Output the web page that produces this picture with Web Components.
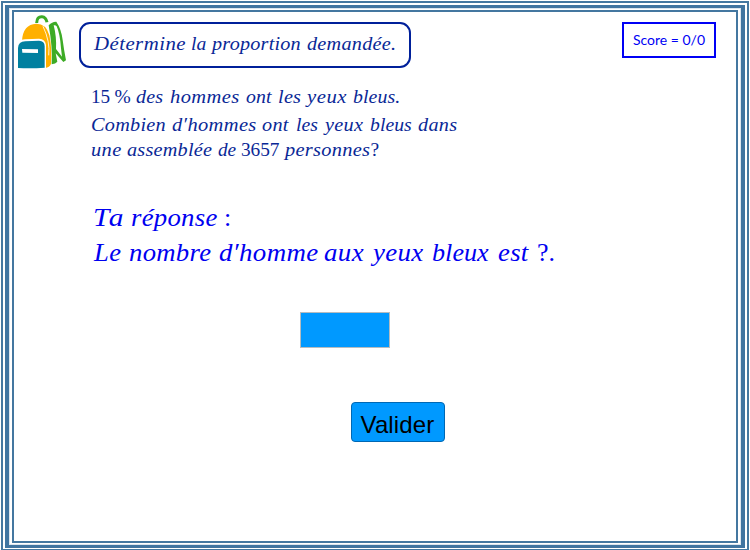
<!DOCTYPE html>
<html lang="fr"><head><meta charset="utf-8"><title>Proportion</title>
<style>html,body{margin:0;width:750px;height:550px;overflow:hidden;background:#fff}</style></head>
<body><exercise-page></exercise-page>
<script>
/* A word set in a fixed measure: part of the difference goes to glyph width, the rest to letter spacing. */
class MathWord extends HTMLElement{
  connectedCallback(){
    const r=this.attachShadow({mode:'open'});
    const w=+this.getAttribute('w');
    r.innerHTML=`<style>:host{display:block;white-space:pre;flex:none;width:${w}px;margin-left:${this.getAttribute('gap')||0}px}
    :host([up]){font-style:normal}
    span{display:inline-block;transform-origin:0 50%}</style><span></span>`;
    const s=r.querySelector('span'); s.textContent=this.getAttribute('t');
    const n=[...s.textContent].length, nat=s.getBoundingClientRect().width;
    const k=n>1?1+(w/nat-1)*.6:1;
    s.style.transform=`scaleX(${k.toFixed(4)})`;
    if(n>1) s.style.letterSpacing=((w/k-nat)/(n-1)).toFixed(3)+'px';
  }
}
/* A line of words, each given as text~left~right, with ~u for upright glyphs. */
class MathLine extends HTMLElement{
  connectedCallback(){
    const r=this.attachShadow({mode:'open'});
    let x=+this.getAttribute('from'), h='';
    for(const p of this.getAttribute('words').split('|')){
      const [t,a,b,up]=p.split('~');
      h+=`<math-word t="${t}" w="${(b-a).toFixed(1)}" gap="${(a-x).toFixed(1)}" ${up?'up':''}></math-word>`; x=+b;
    }
    r.innerHTML=`<style>:host{display:flex;font-family:"Liberation Serif",serif;font-style:italic;line-height:26px;height:26px}</style>`+h;
  }
}
class SchoolBag extends HTMLElement{
  connectedCallback(){
    this.attachShadow({mode:'open'}).innerHTML=`<style>:host{display:block;width:52px;height:58px}svg{display:block}</style>
    <svg width="52" height="58" viewBox="48 39 156 174">
      <path d="M110 69Q111 49 126 50Q138 51 141 67" fill="none" stroke="#3dab26" stroke-width="9"/>
      <path d="M146 76Q157 64 169 65Q184 87 188 120Q192 151 198 181L190 186L167 160L172 185Q167 192 155 193Q158 141 146 76Z" fill="#3dab26"/>
      <path d="M161 76Q166 74 170 79Q180 101 183 145L186 170L168 147Q170 110 161 76Z" fill="#fff"/>
      <path d="M66 122Q69 73 109 71Q139 71 148 106Q156 142 153 192Q148 204 132 204V124Z" fill="#ffb000"/>
      <path d="M129 79Q151 125 146 166" fill="none" stroke="#fff" stroke-width="2.5"/>
      <path d="M51 204V138Q53 119 75 118L117 116Q136 117 138 135V205Z" fill="#fff"/>
      <path d="M54 204V144Q55 124 76 124L117 122Q134 123 134 139V203Q94 206 54 204Z" fill="#0080a0"/>
      <path d="M66 147L114 148V159L67 158Z" fill="#fff"/>
    </svg>`;
  }
}
class TitleBox extends HTMLElement{
  connectedCallback(){
    this.attachShadow({mode:'open'}).innerHTML=`<style>:host{display:block;box-sizing:border-box;width:332px;height:45.5px;border:2px solid #00209a;border-radius:11px;padding:7px 0 0 12.5px}</style><slot></slot>`;
  }
}
class ScoreBox extends HTMLElement{
  connectedCallback(){
    this.attachShadow({mode:'open'}).innerHTML=`<style>:host{display:block;box-sizing:border-box;width:94px;height:36px;border:2px solid #0000f5;color:#0000f5;font:14px/18px Lato,sans-serif;padding:7px 0 0 9px}</style><math-word t="Score = 0/0" w="72"></math-word>`;
  }
}
class AnswerField extends HTMLElement{
  connectedCallback(){
    this.attachShadow({mode:'open'}).innerHTML=`<style>:host{display:block;width:90px;height:36px}input{display:block;box-sizing:border-box;width:100%;height:100%;margin:0;border:1px solid #b5bcc0;background:#09f;border-radius:0;outline:0}</style><input aria-label="Réponse">`;
  }
}
class ValidateButton extends HTMLElement{
  connectedCallback(){
    this.attachShadow({mode:'open'}).innerHTML=`<style>:host{display:block;width:94px;height:40px}button{display:block;box-sizing:border-box;width:100%;height:100%;margin:0;padding:5px 0 0;border:1px solid #0068b4;background:#09f;border-radius:4px;color:#000;font:24px/32px "Liberation Sans",sans-serif;letter-spacing:.15px;text-align:center;white-space:nowrap}</style><button><slot></slot></button>`;
  }
}
/* Three nested outlines around the page. */
class TripleFrame extends HTMLElement{
  connectedCallback(){
    this.attachShadow({mode:'open'}).innerHTML=`<style>:host{display:block;box-sizing:border-box;width:750px;height:550px;padding:1px 1px 0}
    div{box-sizing:border-box;height:100%;border:solid #4477a0}
    .a{border-width:2px 2px 1px;padding:2px 2px 1px}.b{border-width:3px 4px;border-color:#4074a0;padding:2px 3px;box-shadow:inset 0 0 0 1px #dce5ee}.c{border-width:2px}</style>
    <div class="a"><div class="b"><div class="c"><slot></slot></div></div></div>`;
  }
}
class ExercisePage extends HTMLElement{
  connectedCallback(){
    this.attachShadow({mode:'open'}).innerHTML=`<style>:host{display:block}
    .head{display:flex;align-items:flex-start;padding:1px 0 0 2px;height:59px}
    title-box{margin:9px 0 0 11px;color:#0a2896;font-size:19.5px}
    score-box{margin:9px 0 0 211px}
    .q{color:#0a2896;font-size:19.5px;display:grid;grid-template-rows:27.5px 25px 26px;padding:12px 0 0 76px}
    .r{color:#0000f0;font-size:26px;display:grid;row-gap:9px;padding:42.5px 0 0 78px}
    answer-field{margin:46px 0 0 286px}validate-button{margin:54px 0 0 336.5px}</style>
    <triple-frame>
      <div class="head"><school-bag></school-bag>
        <title-box><math-line from="94" words="Détermine~94~185.5|la~191.7~207|proportion~213~301.7|demandée.~308~397"></math-line></title-box>
        <score-box></score-box></div>
      <div class="q">
        <math-line from="90" words="15~90.5~109.5~u|%~114.5~130.5~u|des~136.3~163.3|hommes~169.7~239|ont~246~271.5|les~278.3~301.3|yeux~307.5~347|bleus.~352.7~400"></math-line>
        <math-line from="90" words="Combien~91~165.7|d′hommes~171.7~256|ont~262.3~288.7|les~295.7~317.7|yeux~325~363|bleus~370~411.7|dans~417.7~456.7"></math-line>
        <math-line from="90" words="une~91~121.3|assemblée~127.3~212.3|de~217.7~235.7|3657~241~279.5~u|personnes~285~370|?~370.5~380~u"></math-line>
      </div>
      <div class="r">
        <math-line from="92" words="Ta~92.5~123|réponse~130.7~217|:~224~231~u"></math-line>
        <math-line from="92" words="Le~94~121|nombre~129~211|d′homme~218.7~317.8|aux~323.7~363.3|yeux~373~423.3|bleux~432.3~489|est~498~528.3|?.~537~555~u"></math-line>
      </div>
      <answer-field></answer-field>
      <validate-button>Valider</validate-button>
    </triple-frame>`;
  }
}
customElements.define('math-word',MathWord);
customElements.define('math-line',MathLine);
customElements.define('school-bag',SchoolBag);
customElements.define('title-box',TitleBox);
customElements.define('score-box',ScoreBox);
customElements.define('answer-field',AnswerField);
customElements.define('validate-button',ValidateButton);
customElements.define('triple-frame',TripleFrame);
customElements.define('exercise-page',ExercisePage);
</script></body></html>
